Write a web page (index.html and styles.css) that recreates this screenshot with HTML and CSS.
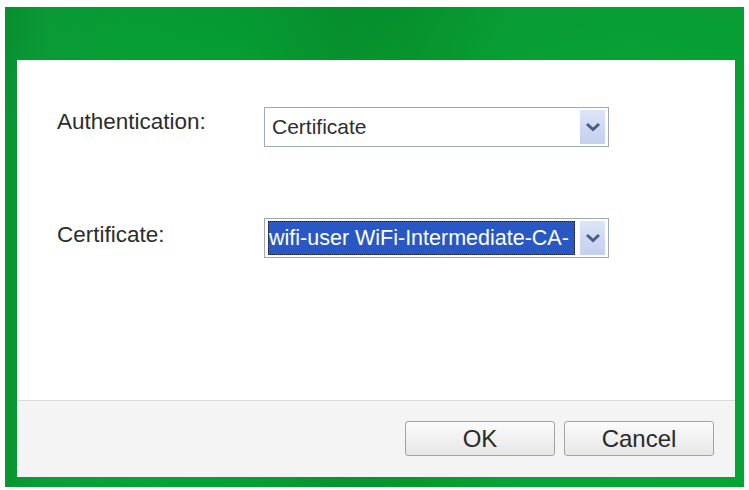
FILE: index.html
```html
<!DOCTYPE html>
<html>
<head>
<meta charset="utf-8">
<link rel="stylesheet" href="styles.css">
</head>
<body>
<div class="window">
  <div class="content">
    <div class="form">
      <div class="row row-auth">
        <span class="label">Authentication:</span>
        <div class="select">
          <span class="value">Certificate</span>
          <span class="arrow"><svg width="16" height="10" viewBox="0 0 16 10"><path d="M2 2 L8 7.5 L14 2" fill="none" stroke="#4a5d84" stroke-width="3" stroke-linejoin="miter"/></svg></span>
        </div>
      </div>
      <div class="row row-cert">
        <span class="label">Certificate:</span>
        <div class="select">
          <span class="value selected">wifi-user WiFi-Intermediate-CA-</span>
          <span class="arrow"><svg width="16" height="10" viewBox="0 0 16 10"><path d="M2 2 L8 7.5 L14 2" fill="none" stroke="#4a5d84" stroke-width="3" stroke-linejoin="miter"/></svg></span>
        </div>
      </div>
    </div>
    <div class="footer">
      <button class="btn">OK</button>
      <button class="btn">Cancel</button>
    </div>
  </div>
</div>
</body>
</html>
```

FILE: styles.css
```css
html, body {
  margin: 0;
  padding: 0;
  background: #ffffff;
}
body {
  font-family: "Liberation Sans", Arial, sans-serif;
  color: #2a2a2a;
}
.window {
  margin: 7px 5px 0 5px;
  width: 739px;
  height: 480px;
  box-sizing: border-box;
  padding: 53px 9px 10px 12px;
  background-color: #06a234;
  background-image:
    linear-gradient(180deg, rgba(0,60,20,0.08) 0%, rgba(0,0,0,0) 25%),
    linear-gradient(90deg, #089532 0%, #0aa038 6%, #06a336 18%, #05a135 32%, #07952f 45%, #06982f 55%, #08a336 68%, #07a636 85%, #06a435 100%);
  background-repeat: no-repeat;
}
.content {
  height: 417px;
  background: #ffffff;
  display: flex;
  flex-direction: column;
}
.form {
  height: 340px;
  box-sizing: border-box;
  padding: 47px 0 0 40px;
  display: flex;
  flex-direction: column;
  gap: 71px;
}
.row {
  display: flex;
  align-items: center;
  height: 40px;
}
.label {
  width: 207px;
  font-size: 22.5px;
  color: #2c2c2c;
}
.row-auth .label {
  position: relative;
  top: -5px;
}
.row-cert .label {
  position: relative;
  top: -3px;
}
.select {
  width: 345px;
  height: 40px;
  box-sizing: border-box;
  border: 1px solid #9fa8b6;
  background: #ffffff;
  display: flex;
  align-items: center;
  padding: 2px 3px 2px 3px;
}
.value {
  flex: 1;
  font-size: 21px;
  padding-left: 4px;
  white-space: nowrap;
  overflow: hidden;
  color: #2e2e2e;
  height: 100%;
  display: flex;
  align-items: center;
}
.value.selected {
  background: #2958c4;
  color: #ffffff;
  padding-left: 1px;
  margin-right: 5px;
  outline: 1px dotted #111a40;
  outline-offset: -1px;
  font-size: 21.5px;
}
.arrow {
  width: 25px;
  height: 100%;
  background: linear-gradient(180deg, #dde6f8 0%, #cdd8f2 55%, #c3d0ee 100%);
  display: flex;
  align-items: center;
  justify-content: center;
}
.footer {
  flex: 1;
  border-top: 1px solid #dcdcdc;
  background: #f4f4f4;
  display: flex;
  justify-content: flex-end;
  align-items: flex-start;
  gap: 9px;
  padding: 20px 21px 0 0;
}
.btn {
  width: 150px;
  height: 35px;
  font-family: "Liberation Sans", Arial, sans-serif;
  font-size: 24px;
  color: #2a2a2a;
  border: 1px solid #a4a4a4;
  border-radius: 3px;
  background: linear-gradient(180deg, #fbfbfb 0%, #f1f1f1 50%, #e6e6e6 100%);
  padding: 0;
  line-height: 33px;
}
```
